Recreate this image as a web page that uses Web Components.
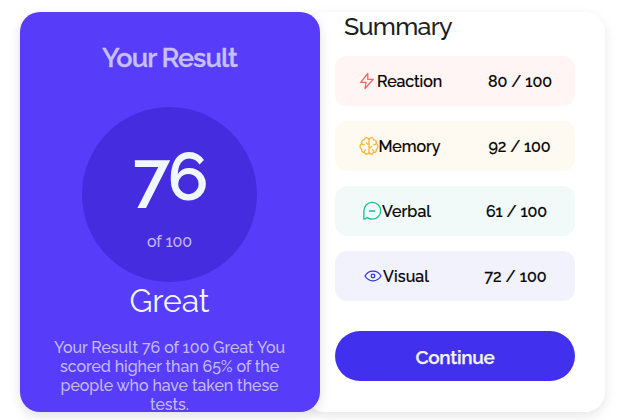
<!DOCTYPE html>
<html lang="en">
<head>
<meta charset="utf-8">
<title>Results summary</title>
<style>
body{margin:0;background:#fff;font-family:Raleway,Lato,"Open Sans",sans-serif;width:621px;height:420px;overflow:hidden}
</style>
</head>
<body>
<results-page></results-page>
<script>
const define = (name, html, setup) => customElements.define(name, class extends HTMLElement {
  connectedCallback() {
    if (this.shadowRoot) return;
    this.attachShadow({mode: 'open'}).innerHTML = html;
    if (setup) setup(this);
  }
});

// One line of text, tracked so that it fills the given width.
define('fit-text', `<style>
:host{display:block;white-space:pre;flex:none;line-height:inherit}
</style><span id="t"></span>`, el => {
  const t = el.shadowRoot.getElementById('t');
  const text = el.getAttribute('text');
  t.textContent = text;
  const w = +el.getAttribute('w');
  el.style.width = w + 'px';
  t.style.letterSpacing = ((w - t.getBoundingClientRect().width) / text.length) + 'px';
});

const icons = {
  reaction: '<path d="M10.8 2.5 3.7 11.3H9L8 17.5 16.3 8.3H10.8Z"/>',
  memory: '<path d="M10 2.6v15M10 3.8C9.2.8 5.6 1.2 5.3 3.8 3 3.8 2 6 2.9 7.7.4 8.8.4 12.2 2.6 13 2.2 15.4 3.8 16.6 5.5 16.4 6.6 19.2 10 18.6 10 15.8 10 18.6 13.4 19.2 14.5 16.4 16.2 16.6 17.8 15.4 17.4 13 19.6 12.2 19.6 8.8 17.1 7.7 18 6 17 3.8 14.7 3.8 14.4 1.2 10.8.8 10 3.8M2.9 7.7Q3.8 8.9 5.2 8.7M17.1 7.7Q16.2 8.9 14.8 8.7M5.5 16.4Q5.2 14.6 6.4 13.8M14.5 16.4Q14.8 14.6 13.6 13.8M10 8.4Q8 8.4 7.4 6.8M10 11.8Q12 11.8 12.6 10.2"/>',
  verbal: '<path d="M1.9 18.2V10A8.4 8.4 0 1 1 10.3 18.2Q7.5 18.2 5 16.6Q3.8 18 1.9 18.2ZM7.4 10h5.4"/>',
  visual: '<path d="M2 10Q4.8 5.2 10 5.2T18 10Q15.2 14.8 10 14.8T2 10Z"/><circle cx="10" cy="10" r="1.8"/>'
};
define('score-icon', `<style>:host{display:block;width:20px;height:20px;flex:none}svg{display:block;fill:none;stroke:currentColor;stroke-width:1.3;stroke-linejoin:round;stroke-linecap:round}</style><svg width="20" height="20" viewBox="0 0 20 20"></svg>`,
  el => { el.shadowRoot.querySelector('svg').innerHTML = icons[el.getAttribute('name')]; });

define('score-row', `<style>
:host{display:flex;align-items:center;box-sizing:border-box;height:50px;border-radius:12px;font-size:16px;line-height:22px;font-weight:500;color:#000}
::slotted(fit-text){padding-top:1px;-webkit-text-stroke:.2px #000}
.gap{flex:1}
</style><slot name="icon"></slot><slot name="label"></slot><span class="gap"></span><slot name="score"></slot>`);

define('result-card', `<style>
:host{display:flex;flex-direction:column;align-items:center;box-sizing:border-box;width:300px;height:400px;padding-right:1px;border-radius:20px;background:#573cf9;box-shadow:0 4px 12px rgba(0,0,0,.12);position:relative;z-index:1;overflow:hidden;color:#c8c0fb}
.title{margin-top:30px;font-size:27px;line-height:32px;font-weight:600;-webkit-text-stroke:.3px #c8c0fb}
.disc{flex:none;width:175px;height:175px;border-radius:50%;background:#452cdf;margin-top:33px;display:flex;flex-direction:column;align-items:center}
.big{margin-top:27px;font-size:68px;line-height:84px;font-weight:600;color:#f0f8ff}
.of{margin-top:14px;font-size:16px;line-height:20px;font-weight:500;color:#c3baf5}
.great{margin-top:-1px;font-size:32px;line-height:40px;color:#f0f8ff;font-weight:400}
.copy{margin-top:17px;font-size:16px;line-height:19px;font-weight:500;display:flex;flex-direction:column;align-items:center;color:#c4bafb}
</style>
<fit-text class="title" text="Your Result" w="135"></fit-text>
<div class="disc"><fit-text class="big" text="76" w="73"></fit-text><fit-text class="of" text="of 100" w="45"></fit-text></div>
<fit-text class="great" text="Great" w="80"></fit-text>
<div class="copy">
<fit-text text="Your Result 76 of 100 Great You" w="231"></fit-text>
<fit-text text="scored higher than 65% of the" w="219"></fit-text>
<fit-text text="people who have taken these" w="218"></fit-text>
<fit-text text="tests." w="39"></fit-text>
</div>`);

define('pill-button', `<style>
:host{display:block;margin-top:30px}
button{all:unset;box-sizing:border-box;width:100%;height:50px;padding-top:1px;border-radius:25px;background:#4131ee;color:#f5f3e4;display:flex;align-items:center;justify-content:center;line-height:24px}
</style><button><slot></slot></button>`);

define('summary-card', `<style>
:host{display:block;box-sizing:border-box;width:300px;height:400px;margin-left:-15px;padding:0 30px;border-radius:20px;background:#fff;box-shadow:0 4px 12px rgba(0,0,0,.1)}
.title{font-size:25px;line-height:28px;font-weight:500;color:#1f1f1f;margin-left:9px}
.rows{display:grid;gap:15px;margin-top:16px}
</style><fit-text class="title" text="Summary" w="108"></fit-text><div class="rows"></div>
<pill-button><fit-text text="Continue" w="79" style="font-size:19px;font-weight:600;-webkit-text-stroke:.25px #f5f3e4"></fit-text></pill-button>`, el => {
  const rows = [
    ['reaction', 'Reaction', 65, 22, 0, '80 / 100', 64, 23, '#ff6467', '#fff5f5'],
    ['memory', 'Memory', 62, 24, -0.5, '92 / 100', 62, 24.5, '#ffb52c', '#fffaf1'],
    ['verbal', 'Verbal', 49, 27, 0, '61 / 100', 61, 28, '#18bd94', '#f1faf9'],
    ['visual', 'Visual', 46, 28, 0, '72 / 100', 62, 28.5, '#2b39d4', '#f2f2fd']
  ];
  el.shadowRoot.querySelector('.rows').innerHTML = rows.map(([icon, label, lw, pad, gap, score, sw, end, color, bg]) =>
    `<score-row style="background:${bg};padding:0 ${end}px 0 ${pad}px"><score-icon slot="icon" name="${icon}" style="color:${color}"></score-icon><fit-text slot="label" style="margin-left:${gap}px" text="${label}" w="${lw}"></fit-text><fit-text slot="score" text="${score}" w="${sw}"></fit-text></score-row>`).join('');
});

define('results-page', `<style>:host{display:flex;padding:12px 0 0 20px}</style><result-card></result-card><summary-card></summary-card>`);
</script>
</body>
</html>
